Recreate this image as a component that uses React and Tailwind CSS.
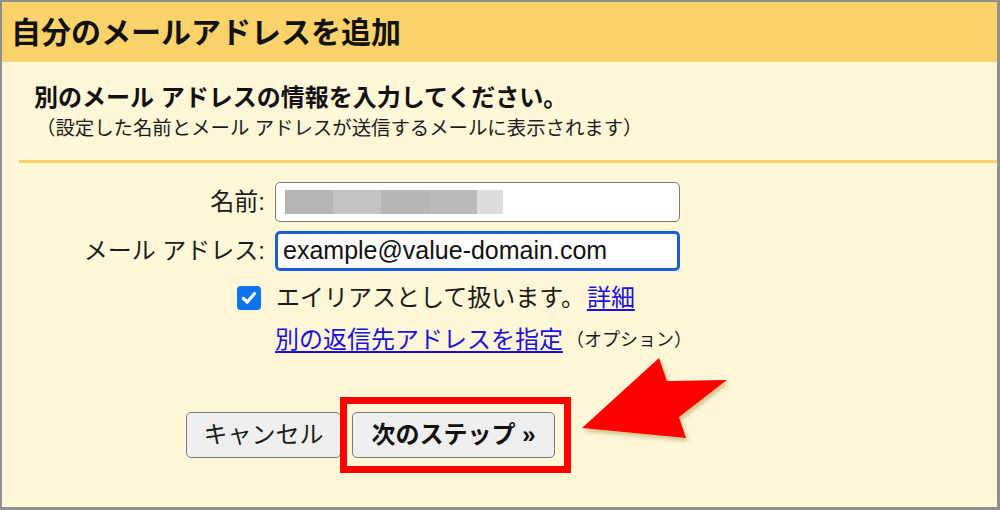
export default function App() {
  return (
    <div className="relative w-[1000px] h-[510px] overflow-hidden bg-[#fff7d8] border-solid border-[#8f8f8f] border-t-2 border-l-2 border-r-[3px] border-b-[3px] font-['Liberation_Sans','Noto_Sans_CJK_JP',sans-serif] text-[#1c1c1c]">
      <div className="h-[60px] bg-[#fcd36a] flex items-center pl-[9px] text-[30px] font-bold text-[#111]">
        自分のメールアドレスを追加
      </div>
      <div className="pt-[20px] pl-[32px] text-[24px] leading-[32px] font-bold text-[#111]">
        別のメール アドレスの情報を入力してください。
      </div>
      <div className="mt-[1px] pl-[34px] text-[19.4px] leading-[26px]">
        （設定した名前とメール アドレスが送信するメールに表示されます）
      </div>
      <div className="mt-[19px] ml-[17px] h-[3px] bg-[#fcd36a]" />

      <div className="mt-[19px] grid grid-cols-[263px_405px] gap-x-[10px] text-[24px]">
        <div className="h-[40px] flex items-center justify-end">名前:</div>
        <div className="h-[40px] rounded-[5px] border-[1.5px] border-[#7a7a7a] bg-white flex items-center pl-[9px]">
          <div className="flex h-[24px]">
            <div className="w-[48px] bg-[#b5b5b5]" />
            <div className="w-[48px] bg-[#c4c4c4]" />
            <div className="w-[49px] bg-[#b6b6b6]" />
            <div className="w-[47px] bg-[#bababa]" />
            <div className="w-[26px] bg-[#dddddd]" />
          </div>
        </div>

        <div className="mt-[9px] h-[40px] flex items-center justify-end">メール アドレス:</div>
        <div className="mt-[9px] h-[40px] rounded-[5px] border-[3px] border-[#1a5fd3] bg-white flex items-center pl-[5px] text-[25px] text-[#111]">
          example@value-domain.com
        </div>

        <div className="mt-[7px] h-[40px] flex items-center justify-end pr-[4px]">
          <div className="w-[24px] h-[24px] rounded-[4px] bg-[#0b72f0] flex items-center justify-center">
            <svg width="18" height="18" viewBox="0 0 18 18">
              <path d="M3.5 9.5 L7.2 13.2 L14.5 4.5" fill="none" stroke="white" strokeWidth="3.2" strokeLinecap="round" strokeLinejoin="round" />
            </svg>
          </div>
        </div>
        <div className="mt-[7px] h-[40px] flex items-center pl-[1px] whitespace-nowrap">
          <span>エイリアスとして扱います。</span>
          <a className="ml-[2px] text-[#1a12d6] underline underline-offset-[3px]">詳細</a>
        </div>

        <div className="mt-[2px] h-[40px]" />
        <div className="mt-[2px] h-[40px] flex items-center whitespace-nowrap">
          <a className="text-[#1a12d6] underline underline-offset-[3px]">別の返信先アドレスを指定</a>
          <span className="ml-[3px] text-[18px]">（オプション）</span>
        </div>
      </div>

      <div className="mt-[52px] pl-[184px] flex gap-[11px] text-[24px]">
        <button className="h-[46px] w-[155px] rounded-[5px] border-[1.5px] border-[#7a7a7a] bg-[#efefef] text-[#1c1c1c]">
          キャンセル
        </button>
        <button className="h-[46px] w-[203px] rounded-[5px] border-[1.5px] border-[#7a7a7a] bg-[#efefef] font-bold text-[#111]">
          次のステップ »
        </button>
      </div>

      <div className="absolute left-[338px] top-[395px] w-[231px] h-[76px] border-[7px] border-[#ff0000]" />

      <svg className="absolute left-[-2px] top-[-2px] pointer-events-none" width="1000" height="510" viewBox="0 0 1000 510">
        <defs>
          <filter id="sh" x="-20%" y="-20%" width="140%" height="140%">
            <feDropShadow dx="2" dy="3" stdDeviation="2" floodColor="#6b5a10" floodOpacity="0.35" />
          </filter>
        </defs>
        <polygon points="582,428 659,358 667,381 727,380 679,417 686,438" fill="#ff0000" filter="url(#sh)" />
      </svg>
    </div>
  );
}
